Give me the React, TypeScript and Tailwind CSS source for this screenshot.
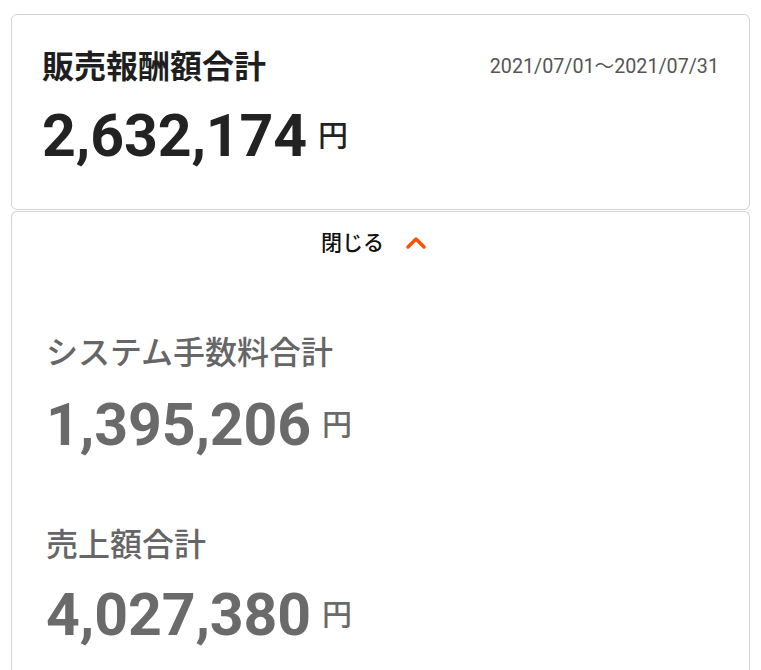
import { ChevronUp } from "lucide-react";

const fuente = { fontFamily: 'Roboto, "Noto Sans CJK JP", sans-serif' };

function Monto({ valor, className }: { valor: string; className: string }) {
  return (
    <div className={`flex items-center ${className}`}>
      <span className="text-[59px] leading-none font-bold tracking-[-0.1px]">{valor}</span>
      <span className="ml-[11px] text-[30px] leading-none font-medium">円</span>
    </div>
  );
}

export default function App() {
  return (
    <div style={fuente} className="bg-white min-h-screen pt-[14px] px-[11px] overflow-hidden">
      <div className="border border-[#d2d2d2] rounded-md px-[30px] pt-[32px] pb-[44px]">
        <div className="flex justify-between items-center">
          <h1 className="text-[32px] leading-[40px] font-bold text-[#1e1e1e]">販売報酬額合計</h1>
          <span className="text-[19.7px] leading-[40px] text-[#555]">2021/07/01〜2021/07/31</span>
        </div>
        <Monto valor="2,632,174" className="mt-[19px] text-[#222]" />
      </div>

      <div className="mt-px border border-b-0 border-[#d2d2d2] rounded-t-md px-[34px] pt-[15px] pb-[30px]">
        <button className="flex w-full items-center justify-center gap-[16px] pr-[8px] leading-[28px]">
          <span className="text-[21px] font-medium text-[#111]">閉じる</span>
          <ChevronUp className="w-[32px] h-[32px] text-[#ff5000]" strokeWidth={2.6} />
        </button>

        <div className="mt-[74px]">
          <h2 className="text-[32px] leading-[40px] font-medium text-[#666]">システム手数料合計</h2>
          <Monto valor="1,395,206" className="mt-[22px] text-[#6a6a6a]" />
        </div>

        <div className="mt-[71px]">
          <h2 className="text-[32px] leading-[40px] font-medium text-[#666]">売上額合計</h2>
          <Monto valor="4,027,380" className="mt-[20px] text-[#6a6a6a]" />
        </div>
      </div>
    </div>
  );
}
